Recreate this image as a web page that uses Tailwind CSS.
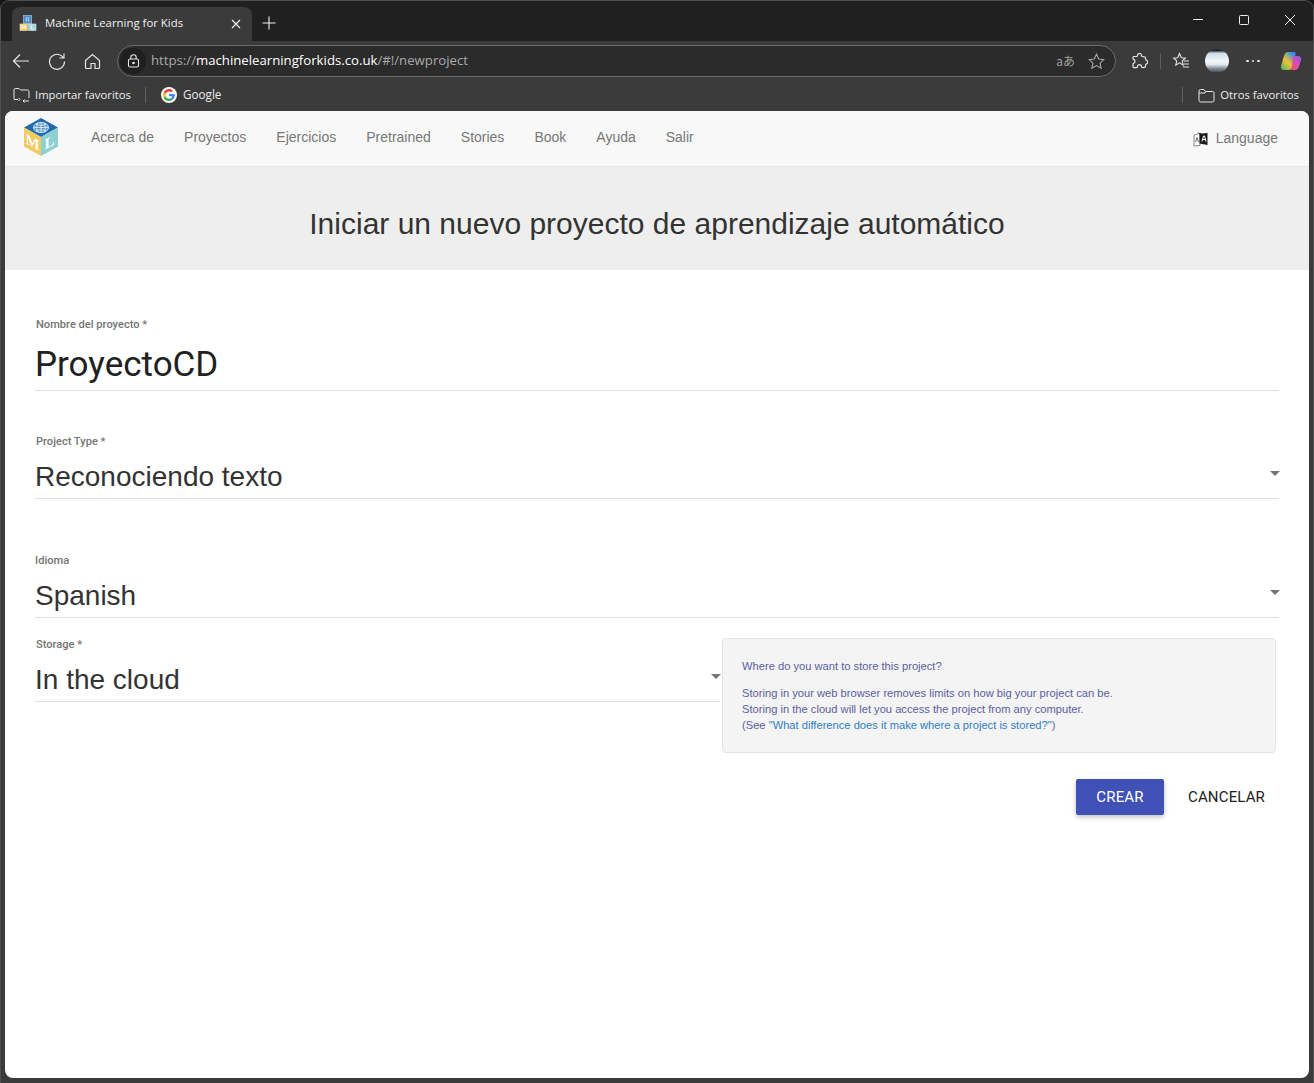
<!DOCTYPE html>
<html lang="es">
<head>
<meta charset="utf-8">
<title>Machine Learning for Kids</title>
<script src="https://cdn.jsdelivr.net/npm/@tailwindcss/browser@4"></script>
</head>
<body class="m-0 bg-[#151515]">
<div class="relative w-[1314px] h-[1083px] overflow-hidden rounded-t-[9px] bg-[#3b3b3b] flex flex-col font-['Open_Sans','Noto_Sans',sans-serif]">
  <div class="absolute inset-0 rounded-t-[9px] border-t border-x border-[#4f4f4f] pointer-events-none"></div>
  <!-- title bar -->
  <div class="h-[41px] shrink-0 bg-[#202020] flex items-end pl-[12px]">
    <div class="w-[240px] h-[34px] bg-[#3b3b3b] rounded-t-lg flex items-center pl-[7px] pr-[11px]">
      <svg class="w-[18px] h-[16px] shrink-0 -mt-[2px]" viewBox="0 0 18 16">
        <rect x="4.500" y="0.500" width="8" height="8" fill="#4f8ac4" stroke="#8fb8dc" stroke-width="0.800"/>
        <path d="M6.500 3h4M6.500 5h4M7.500 2v5M9.500 2v5" stroke="#cfe3f2" stroke-width="0.500"/>
        <rect x="1" y="9" width="7.500" height="6.500" fill="#f2cf7a" stroke="#f7e2ad" stroke-width="0.600"/>
        <rect x="9.500" y="9" width="7.500" height="6.500" fill="#a5d6dc" stroke="#cfeaee" stroke-width="0.600"/>
        <path d="M3 14v-3.500L4.700 13l1.700-2.500V14" fill="none" stroke="#fff" stroke-width="0.800"/>
        <path d="M12.300 10.500V14H15" fill="none" stroke="#fff" stroke-width="0.800"/>
      </svg>
      <span class="ml-[8px] -mt-[2px] text-[11.400px] text-[#f0f0f0] flex-1 whitespace-nowrap">Machine Learning for Kids</span>
      <svg class="w-[10px] h-[10px]" viewBox="0 0 10 10" fill="none" stroke="#f0f0f0" stroke-width="1.200"><path d="M1 1l8 8M9 1l-8 8"/></svg>
    </div>
    <svg class="w-[14px] h-[14px] ml-[10px] mb-[11px]" viewBox="0 0 14 14" fill="none" stroke="#f0f0f0" stroke-width="1.100"><path d="M7 0.500v13M0.500 7h13"/></svg>
    <div class="ml-auto flex items-center h-[41px] pb-[1px] pr-[1px]">
      <svg class="w-[46px] h-[12px]" viewBox="0 0 46 12" fill="none" stroke="#eee" stroke-width="1"><path d="M18 5.500h10"/></svg>
      <svg class="w-[46px] h-[12px]" viewBox="0 0 46 12" fill="none" stroke="#eee" stroke-width="1"><rect x="18.500" y="1.500" width="9" height="9" rx="1"/></svg>
      <svg class="w-[46px] h-[12px]" viewBox="0 0 46 12" fill="none" stroke="#eee" stroke-width="1"><path d="M18 1l10 10M28 1l-10 10"/></svg>
    </div>
  </div>
  <!-- toolbar -->
  <div class="h-[38px] shrink-0 flex items-center pt-[2px] pl-[12px] pr-[12px]">
    <svg class="w-[18px] h-[18px]" viewBox="0 0 18 18" fill="none" stroke="#e6e6e6" stroke-width="1.200"><path d="M17 9H1.500M8 2.500L1.500 9L8 15.500"/></svg>
    <svg class="w-[18px] h-[18px] ml-[18px]" viewBox="0 0 18 18" fill="none" stroke="#e6e6e6" stroke-width="1.200"><path d="M15.500 6A7.500 7.500 0 1 0 16.500 9.500M16 1.500V6h-4.500"/></svg>
    <svg class="w-[17px] h-[17px] ml-[18px]" viewBox="0 0 17 17" fill="none" stroke="#e6e6e6" stroke-width="1.200"><path d="M1.500 7.500L8.500 1.500l7 6v7a1 1 0 0 1-1 1h-3.500v-5h-4v5H2.500a1 1 0 0 1-1-1z"/></svg>
    <div class="ml-[16px] w-[999px] h-[32px] rounded-full border border-[#6a6a6a] bg-[#2b2b2b] flex items-center pl-[2px] pr-[10px]">
      <div class="w-[26px] h-[26px] rounded-full bg-[#1f1f1f] flex items-center justify-center">
        <svg class="w-[13px] h-[14px]" viewBox="0 0 13 14" fill="none" stroke="#e6e6e6" stroke-width="1.100"><rect x="1.500" y="5" width="10" height="8" rx="1.500"/><path d="M3.800 5V3.500a2.700 2.700 0 0 1 5.400 0V5"/><circle cx="6.500" cy="9" r="0.800" fill="#e6e6e6"/></svg>
      </div>
      <span class="ml-[5px] text-[13.200px] text-[#a9a9a9] whitespace-nowrap">https://<span class="text-white">machinelearningforkids.co.uk</span>/#!/newproject</span>
      <span class="ml-auto text-[12px] text-[#a0a0a0] font-['Noto_Sans_CJK_JP',sans-serif] whitespace-nowrap">aあ</span>
      <svg class="w-[17px] h-[17px] ml-[13px]" viewBox="0 0 17 17" fill="none" stroke="#a8a8a8" stroke-width="1.100"><path d="M8.500 1.200l2.200 4.800 5.200.6-3.900 3.500 1.100 5.100-4.600-2.600-4.600 2.600 1.100-5.100L1.100 6.600l5.200-.6z"/></svg>
    </div>
    <svg class="w-[17px] h-[17px] ml-[15px]" viewBox="0 0 17 17" fill="none" stroke="#e6e6e6" stroke-width="1.200"><path d="M6.500 2.500a2 2 0 0 1 4 0c0 .6.300 1 1 1l2 .3c.7 0 1 .4 1 1l.2 1.500c0 .7.400 1 1 1a2 2 0 0 1 0 3.500c-.6 0-1 .3-1 1l-.2 1.500c0 .6-.3 1-1 1l-2 .3c-.7 0-1-.4-1-1a2 2 0 0 0-4 0c0 .6-.3 1-1 1h-2.500c-.7 0-1-.4-1-1v-2.500c0-.7.400-1 1-1a2 2 0 0 0 0-3.500c-.6 0-1-.3-1-1V4.500c0-.6.300-1 1-1h2.500c.7 0 1-.4 1-1z"/></svg>
    <div class="w-px h-[16px] bg-[#5e5e5e] ml-[12px]"></div>
    <svg class="w-[18px] h-[18px] ml-[11px]" viewBox="0 0 18 18" fill="none" stroke="#e6e6e6" stroke-width="1.100"><path d="M7.500 1.500l1.800 4.300 4 .3-3 2.800.9 4.200-3.700-2.300-3.700 2.300.9-4.200-3-2.800 4-.3zM12 9h5M12 12h5M11 15h6"/></svg>
    <div class="w-[24px] h-[24px] ml-[15px] rounded-full bg-[linear-gradient(180deg,#1c2530_0%,#1c2530_6%,#cfdbe6_18%,#f4f6f8_50%,#e4e8ec_65%,#87929f_80%,#5d6774_92%,#232b36_100%)]"></div>
    <span class="ml-[17px] w-[16px] flex gap-[3px] items-center"><span class="w-[2.500px] h-[2.500px] rounded-full bg-[#e6e6e6]"></span><span class="w-[2.500px] h-[2.500px] rounded-full bg-[#e6e6e6]"></span><span class="w-[2.500px] h-[2.500px] rounded-full bg-[#e6e6e6]"></span></span>
    <svg class="w-[22px] h-[22px] ml-[18px]" viewBox="0 0 22 22"><defs><linearGradient id="c1" x1="0" y1="1" x2="0.700" y2="0"><stop offset="0" stop-color="#3fb36b"/><stop offset="0.500" stop-color="#f2c230"/><stop offset="1" stop-color="#2f8ff0"/></linearGradient><linearGradient id="c2" x1="0" y1="1" x2="1" y2="0"><stop offset="0" stop-color="#f0584a"/><stop offset="0.600" stop-color="#d84bb8"/><stop offset="1" stop-color="#7a5cf0"/></linearGradient></defs><path d="M8 2h6c1 0 1.500.6 1.800 1.500L12 17c-.5 2-1.800 3-3.500 3H4c-2.500 0-3.500-1.800-3-4L4 6c.7-2.500 2-4 4-4z" fill="url(#c1)"/><path d="M13 6h5c2.500 0 3.800 1.800 3 4.500l-2 6c-.8 2.500-2.200 3.500-4 3.500H8.500c1.800 0 2.800-1 3.300-3z" fill="url(#c2)"/></svg>
  </div>
  <!-- bookmarks -->
  <div class="h-[32px] shrink-0 flex items-center pl-[13px] pr-[15px] text-[11.300px] text-[#ececec]">
    <svg class="w-[17px] h-[16px]" viewBox="0 0 17 16" fill="none" stroke="#e6e6e6" stroke-width="1"><path d="M1 12V3a1.500 1.500 0 0 1 1.500-1.500H6L7.500 3H14.500A1.500 1.500 0 0 1 16 4.500V11M5 12.500H1M11 14h5M7 12.500l-1.500-1.500M7 12.500l-1.500 1.500M10 14l1.500-1.500M10 14l1.500 1.500"/></svg>
    <span class="ml-[5px] whitespace-nowrap">Importar favoritos</span>
    <div class="w-px h-[16px] bg-[#5e5e5e] ml-[14px]"></div>
    <div class="ml-[15px] w-[16px] h-[16px] rounded-full bg-white flex items-center justify-center">
      <svg class="w-[12px] h-[12px]" viewBox="0 0 48 48"><path fill="#EA4335" d="M24 9.500c3.500 0 6.700 1.300 9.100 3.500l6.800-6.800C35.800 2.400 30.200 0 24 0 14.600 0 6.500 5.400 2.600 13.200l7.900 6.200C12.400 13.700 17.700 9.500 24 9.500z"/><path fill="#4285F4" d="M47 24.500c0-1.600-.2-3.100-.4-4.500H24v9h12.900c-.6 3-2.200 5.500-4.700 7.200l7.700 6C44.400 37.900 47 31.800 47 24.500z"/><path fill="#FBBC05" d="M10.500 28.600c-.5-1.500-.8-3-.8-4.600s.3-3.200.8-4.600l-7.900-6.200C.9 16.500 0 20.100 0 24s.9 7.500 2.600 10.800z"/><path fill="#34A853" d="M24 48c6.500 0 11.900-2.100 15.900-5.800l-7.700-6c-2.100 1.400-4.900 2.300-8.200 2.300-6.300 0-11.600-4.200-13.500-10l-7.900 6.200C6.500 42.600 14.600 48 24 48z"/></svg>
    </div>
    <span class="ml-[6px] text-[11.700px]">Google</span>
    <div class="w-px h-[16px] bg-[#5e5e5e] ml-auto"></div>
    <svg class="w-[17px] h-[15px] ml-[15px]" viewBox="0 0 17 15" fill="none" stroke="#e6e6e6" stroke-width="1"><path d="M1 3a1.500 1.500 0 0 1 1.500-1.500H6L7.500 3.500H14.500A1.500 1.500 0 0 1 16 5v7.500a1.500 1.500 0 0 1-1.500 1.500h-12A1.500 1.500 0 0 1 1 12.500zM1 5h6L7.500 3.500"/></svg>
    <span class="ml-[5px] whitespace-nowrap">Otros favoritos</span>
  </div>
  <!-- page -->
  <div class="ml-[5px] w-[1304px] h-[967px] shrink-0 bg-white rounded-lg overflow-hidden font-['Liberation_Sans',sans-serif]">
    <nav class="h-[56px] bg-[#f8f8f8] border-b border-[#e7e7e7] flex items-center pl-[18px] pr-[31px] text-[14px] text-[#777777]">
      <svg class="w-[36px] h-[40px] shrink-0 -mt-[3px]" viewBox="0 0 36 40">
        <path d="M18 1L35 10.500L18 20L1 10.500z" fill="#1f6dad"/>
        <path d="M1 10.500L18 20V39L1 29.500z" fill="#f3ca5e"/>
        <path d="M35 10.500L18 20V39L35 29.500z" fill="#8cd0d3"/>
        <ellipse cx="18" cy="10.500" rx="7.500" ry="5" fill="#5a96c6" stroke="#e3eff8" stroke-width="1"/>
        <path d="M10.500 10.500h15M18 5.500v10M13 7.500q5 2 10 0M13 13.500q5-2 10 0M14.500 6q-2 4.500 0 9M21.500 6q2 4.500 0 9" fill="none" stroke="#e3eff8" stroke-width="0.800"/>
        <text transform="translate(9.500 30) skewY(28)" text-anchor="middle" font-family="Liberation Serif" font-weight="700" font-size="15" fill="#fff">M</text>
        <text transform="translate(26.500 30) skewY(-28)" text-anchor="middle" font-family="Liberation Serif" font-weight="700" font-size="15" fill="#fff">L</text>
      </svg>
      <div class="flex gap-[30px] ml-[32px] -mt-[2px]">
        <a>Acerca de</a><a>Proyectos</a><a>Ejercicios</a><a>Pretrained</a><a>Stories</a><a>Book</a><a>Ayuda</a><a>Salir</a>
      </div>
      <div class="ml-auto flex items-center">
        <svg class="w-[15px] h-[16px]" viewBox="0 0 15 16">
          <path d="M1 4L7 2.500V14.500L1 15z" fill="#fff" stroke="#777" stroke-width="0.900"/>
          <path d="M6.500 3L4.500 1.500 9 2.500 14.500 2V14L6.500 12.500z" fill="#1a1a1a"/>
          <path d="M9 10.500L10.500 5h1L13 10.500M9.800 8.500h2.400" fill="none" stroke="#fff" stroke-width="1"/>
          <path d="M2.500 11L4 6.500 5.500 11" fill="none" stroke="#444" stroke-width="0.800"/>
        </svg>
        <span class="ml-[8px]">Language</span>
      </div>
    </nav>
    <div class="h-[103px] pt-[10px] bg-[#eeeeee] flex items-center justify-center text-[30px] text-[#333333]">Iniciar un nuevo proyecto de aprendizaje automático</div>
    <form class="px-[30px] font-['Roboto',sans-serif]">
      <div class="mt-[48px] h-[73px] border-b border-[#e0e0e0] w-[1244px] flex flex-col">
        <label class="text-[11.100px] font-medium text-[#757575] leading-[14px] ml-[1px]">Nombre del proyecto *</label>
        <div class="text-[35px] leading-[44px] mt-[11px] text-[#212121]">ProyectoCD</div>
      </div>
      <div class="mt-[43px] h-[65px] border-b border-[#e0e0e0] w-[1244px] flex flex-col relative">
        <label class="text-[11.100px] font-medium text-[#757575] leading-[14px] ml-[1px] mt-[1px]">Project Type *</label>
        <div class="text-[28px] leading-[34px] mt-[11px] text-[#333333] font-['Liberation_Sans',sans-serif]">Reconociendo texto</div>
        <span class="absolute -right-[1px] top-[37px] w-0 h-0 border-x-[5px] border-x-transparent border-t-[5px] border-t-[#757575]"></span>
      </div>
      <div class="mt-[54px] h-[65px] border-b border-[#e0e0e0] w-[1244px] flex flex-col relative">
        <label class="text-[11.100px] font-medium text-[#757575] leading-[14px] mt-[1px]">Idioma</label>
        <div class="text-[28px] leading-[34px] mt-[11px] text-[#333333] font-['Liberation_Sans',sans-serif]">Spanish</div>
        <span class="absolute -right-[1px] top-[37px] w-0 h-0 border-x-[5px] border-x-transparent border-t-[5px] border-t-[#757575]"></span>
      </div>
      <div class="flex items-start mt-[19px]">
        <div class="h-[65px] border-b border-[#e0e0e0] w-[685px] flex flex-col relative">
          <label class="text-[11.100px] font-medium text-[#757575] leading-[14px] ml-[1px] mt-[1px]">Storage *</label>
          <div class="text-[28px] leading-[34px] mt-[11px] text-[#333333] font-['Liberation_Sans',sans-serif]">In the cloud</div>
          <span class="absolute -right-[1px] top-[37px] w-0 h-0 border-x-[5px] border-x-transparent border-t-[5px] border-t-[#757575]"></span>
        </div>
        <div class="ml-[2px] mt-[1px] w-[554px] h-[115px] bg-[#f4f4f4] border border-[#e3e3e3] rounded-[4px] pl-[19px] pt-[19px] text-[11.160px] leading-[16px] text-[#5a5f9e] font-['Liberation_Sans',sans-serif]">
          <p>Where do you want to store this project?</p>
          <p class="mt-[11px]">Storing in your web browser removes limits on how big your project can be.</p>
          <p>Storing in the cloud will let you access the project from any computer.</p>
          <p>(See <a class="text-[#2f7fc0]">"What difference does it make where a project is stored?"</a>)</p>
        </div>
      </div>
      <div class="flex justify-end items-center mt-[26px] w-[1244px] pr-[14px]">
        <button type="button" class="w-[88px] h-[36px] bg-[#3f51b5] text-white text-[15px] tracking-[0.150px] rounded-[2px] shadow-[0_2px_5px_rgba(0,0,0,0.26)]">CREAR</button>
        <button type="button" class="ml-[24px] text-[15px] tracking-[0.150px] text-[#212121]">CANCELAR</button>
      </div>
    </form>
  </div>
</div>
</body>
</html>
